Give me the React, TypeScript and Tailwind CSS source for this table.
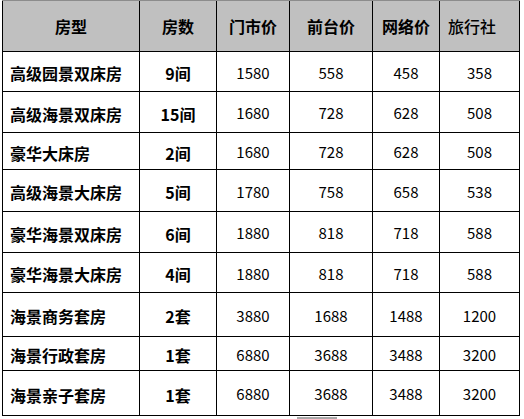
type Room = {
  name: string;
  count: string;
  rack: number;
  front: number;
  web: number;
  agency: number;
  h: string;
};

const rooms: Room[] = [
  { name: "高级园景双床房", count: "9间", rack: 1580, front: 558, web: 458, agency: 358, h: "h-[39px]" },
  { name: "高级海景双床房", count: "15间", rack: 1680, front: 728, web: 628, agency: 508, h: "h-[40px]" },
  { name: "豪华大床房", count: "2间", rack: 1680, front: 728, web: 628, agency: 508, h: "h-[36px]" },
  { name: "高级海景大床房", count: "5间", rack: 1780, front: 758, web: 658, agency: 538, h: "h-[41px]" },
  { name: "豪华海景双床房", count: "6间", rack: 1880, front: 818, web: 718, agency: 588, h: "h-[40px]" },
  { name: "豪华海景大床房", count: "4间", rack: 1880, front: 818, web: 718, agency: 588, h: "h-[39px]" },
  { name: "海景商务套房", count: "2套", rack: 3880, front: 1688, web: 1488, agency: 1200, h: "h-[43px]" },
  { name: "海景行政套房", count: "1套", rack: 6880, front: 3688, web: 3488, agency: 3200, h: "h-[33px]" },
  { name: "海景亲子套房", count: "1套", rack: 6880, front: 3688, web: 3488, agency: 3200, h: "h-[44px]" },
];

const cjk = "font-['Noto_Sans_CJK_SC',sans-serif]";

export default function App() {
  return (
    <div className={`h-[419px] w-[524px] overflow-hidden bg-white text-black ${cjk}`}>
      <div className="ml-[2px] w-[518px] border-t border-[#8c8c8c]">
        <div className="grid grid-cols-[136px_76px_72px_82px_66px_79px] gap-px bg-black px-px pb-px">
          <div className="flex h-[50px] items-center justify-center bg-[#c0c0c0] text-[16px] font-bold">
            房型
          </div>
          <div className="flex h-[50px] items-center justify-center bg-[#c0c0c0] text-[16px] font-bold">
            房数
          </div>
          <div className="flex h-[50px] items-center justify-center bg-[#c0c0c0] text-[16px] font-bold">
            门市价
          </div>
          <div className="flex h-[50px] items-center justify-center bg-[#c0c0c0] text-[16px] font-bold">
            前台价
          </div>
          <div className="flex h-[50px] items-center justify-center bg-[#c0c0c0] text-[16px] font-bold">
            网络价
          </div>
          <div className="flex h-[50px] items-center bg-[#c0c0c0] pl-[8px] text-[16px] font-medium">
            旅行社
          </div>

          {rooms.map((room) => (
            <Row key={room.name} room={room} />
          ))}
        </div>
      </div>
      <div className="ml-[297px] mt-px h-[2px] w-[40px] bg-[#a8a8a8]" />
    </div>
  );
}

function Row({ room }: { room: Room }) {
  const num = `flex ${room.h} items-center justify-center bg-white pt-[3px] text-[15px]`;
  return (
    <>
      <div className={`flex ${room.h} items-center bg-white pl-[7px] pt-[3px] text-[16px] font-bold`}>
        {room.name}
      </div>
      <div className={`flex ${room.h} items-center justify-center bg-white pt-[3px] text-[16px] font-bold`}>
        {room.count}
      </div>
      <div className={num}>{room.rack}</div>
      <div className={num}>{room.front}</div>
      <div className={num}>{room.web}</div>
      <div className={num}>{room.agency}</div>
    </>
  );
}
